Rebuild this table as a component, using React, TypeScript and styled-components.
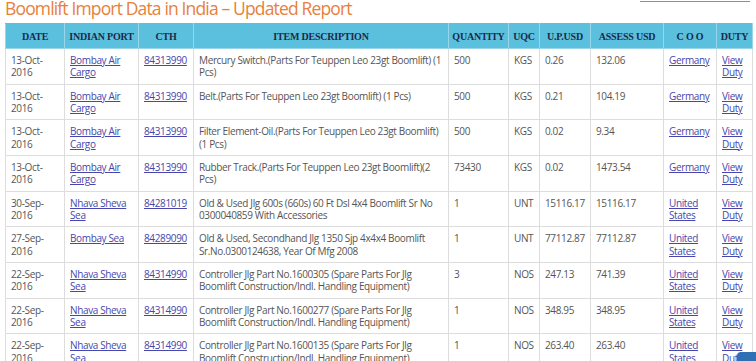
import React from "react";
import styled, { createGlobalStyle } from "styled-components";

const Global = createGlobalStyle`
  html, body { margin: 0; padding: 0; background: #ffffff; }
  body { font-family: "Open Sans", "Liberation Sans", sans-serif; }
`;

const Page = styled.div`
  padding: 0 4px 0 5px;
  position: relative;
`;

const TopBar = styled.div`
  display: flex;
  justify-content: space-between;
  align-items: flex-start;
  height: 23px;
`;

const Title = styled.h2`
  margin: 0;
  font-family: "Open Sans", sans-serif;
  font-weight: 400;
  font-size: 17.5px;
  line-height: 16px;
  color: #e8803c;
  letter-spacing: -0.85px;
  white-space: nowrap;
`;

const SearchEdge = styled.div`
  width: 110px;
  height: 1px;
  border-bottom: 1px solid #8a9098;
  margin-right: 2px;
`;

const Table = styled.table`
  width: 747px;
  border-collapse: collapse;
  table-layout: fixed;
  border: 1px solid #dddddd;
`;

const Th = styled.th`
  height: 24px;
  padding: 0 3px;
  background: #5bc0de;
  color: #1b2a47;
  font-family: "Liberation Serif", "Times New Roman", serif;
  font-weight: 700;
  font-size: 10px;
  letter-spacing: -0.2px;
  text-align: center;
  vertical-align: middle;
  white-space: nowrap;
  border: 1px solid #9ad6ea;
  border-top-color: #5bc0de;
`;

const Td = styled.td`
  padding: 5px 4px 5px 5px;
  vertical-align: top;
  font-size: 10px;
  line-height: 12.33px;
  color: #555555;
  border: 1px solid #dddddd;
  letter-spacing: -0.36px;
`;

const Link = styled.a`
  color: #4646ad;
  text-decoration: underline;
`;

const ScrollTop = styled.div`
  position: fixed;
  left: 737px;
  top: 352px;
  width: 30px;
  height: 30px;
  border-radius: 4px;
  background: #2f6fb4;
`;

type Row = {
  date: string;
  port: string;
  cth: string;
  desc: string;
  qty: string;
  uqc: string;
  up: string;
  assess: string;
  coo: string;
};

const rows: Row[] = [
  { date: "13-Oct-2016", port: "Bombay Air Cargo", cth: "84313990", desc: "Mercury Switch.(Parts For Teuppen Leo 23gt Boomlift) (1 Pcs)", qty: "500", uqc: "KGS", up: "0.26", assess: "132.06", coo: "Germany" },
  { date: "13-Oct-2016", port: "Bombay Air Cargo", cth: "84313990", desc: "Belt.(Parts For Teuppen Leo 23gt Boomlift) (1 Pcs)", qty: "500", uqc: "KGS", up: "0.21", assess: "104.19", coo: "Germany" },
  { date: "13-Oct-2016", port: "Bombay Air Cargo", cth: "84313990", desc: "Filter Element-Oil.(Parts For Teuppen Leo 23gt Boomlift) (1 Pcs)", qty: "500", uqc: "KGS", up: "0.02", assess: "9.34", coo: "Germany" },
  { date: "13-Oct-2016", port: "Bombay Air Cargo", cth: "84313990", desc: "Rubber Track.(Parts For Teuppen Leo 23gt Boomlift)(2 Pcs)", qty: "73430", uqc: "KGS", up: "0.02", assess: "1473.54", coo: "Germany" },
  { date: "30-Sep-2016", port: "Nhava Sheva Sea", cth: "84281019", desc: "Old & Used Jlg 600s (660s) 60 Ft Dsl 4x4 Boomlift Sr No 0300040859 With Accessories", qty: "1", uqc: "UNT", up: "15116.17", assess: "15116.17", coo: "United States" },
  { date: "27-Sep-2016", port: "Bombay Sea", cth: "84289090", desc: "Old & Used, Secondhand Jlg 1350 Sjp 4x4x4 Boomlift Sr.No.0300124638, Year Of Mfg 2008", qty: "1", uqc: "UNT", up: "77112.87", assess: "77112.87", coo: "United States" },
  { date: "22-Sep-2016", port: "Nhava Sheva Sea", cth: "84314990", desc: "Controller Jlg Part No.1600305 (Spare Parts For Jlg Boomlift Construction/Indl. Handling Equipment)", qty: "3", uqc: "NOS", up: "247.13", assess: "741.39", coo: "United States" },
  { date: "22-Sep-2016", port: "Nhava Sheva Sea", cth: "84314990", desc: "Controller Jlg Part No.1600277 (Spare Parts For Jlg Boomlift Construction/Indl. Handling Equipment)", qty: "1", uqc: "NOS", up: "348.95", assess: "348.95", coo: "United States" },
  { date: "22-Sep-2016", port: "Nhava Sheva Sea", cth: "84314990", desc: "Controller Jlg Part No.1600135 (Spare Parts For Jlg Boomlift Construction/Indl. Handling Equipment)", qty: "1", uqc: "NOS", up: "263.40", assess: "263.40", coo: "United States" },
];

const cols = [
  { label: "DATE", w: 59 },
  { label: "INDIAN PORT", w: 74 },
  { label: "CTH", w: 55 },
  { label: "ITEM DESCRIPTION", w: 255 },
  { label: "QUANTITY", w: 60 },
  { label: "UQC", w: 31 },
  { label: "U.P.USD", w: 51 },
  { label: "ASSESS USD", w: 73 },
  { label: "C O O", w: 53 },
  { label: "DUTY", w: 36 },
];

export default function App() {
  return (
    <>
      <Global />
      <Page>
        <TopBar>
          <Title>Boomlift Import Data in India – Updated Report</Title>
          <SearchEdge />
        </TopBar>
        <Table>
          <colgroup>
            {cols.map((c) => (
              <col key={c.label} style={{ width: c.w }} />
            ))}
          </colgroup>
          <thead>
            <tr>
              {cols.map((c) => (
                <Th key={c.label}>{c.label}</Th>
              ))}
            </tr>
          </thead>
          <tbody>
            {rows.map((r, i) => (
              <tr key={i}>
                <Td>{r.date}</Td>
                <Td><Link href="#">{r.port}</Link></Td>
                <Td><Link href="#">{r.cth}</Link></Td>
                <Td>{r.desc}</Td>
                <Td>{r.qty}</Td>
                <Td>{r.uqc}</Td>
                <Td>{r.up}</Td>
                <Td>{r.assess}</Td>
                <Td><Link href="#">{r.coo}</Link></Td>
                <Td><Link href="#">View Duty</Link></Td>
              </tr>
            ))}
          </tbody>
        </Table>
        <ScrollTop />
      </Page>
    </>
  );
}
